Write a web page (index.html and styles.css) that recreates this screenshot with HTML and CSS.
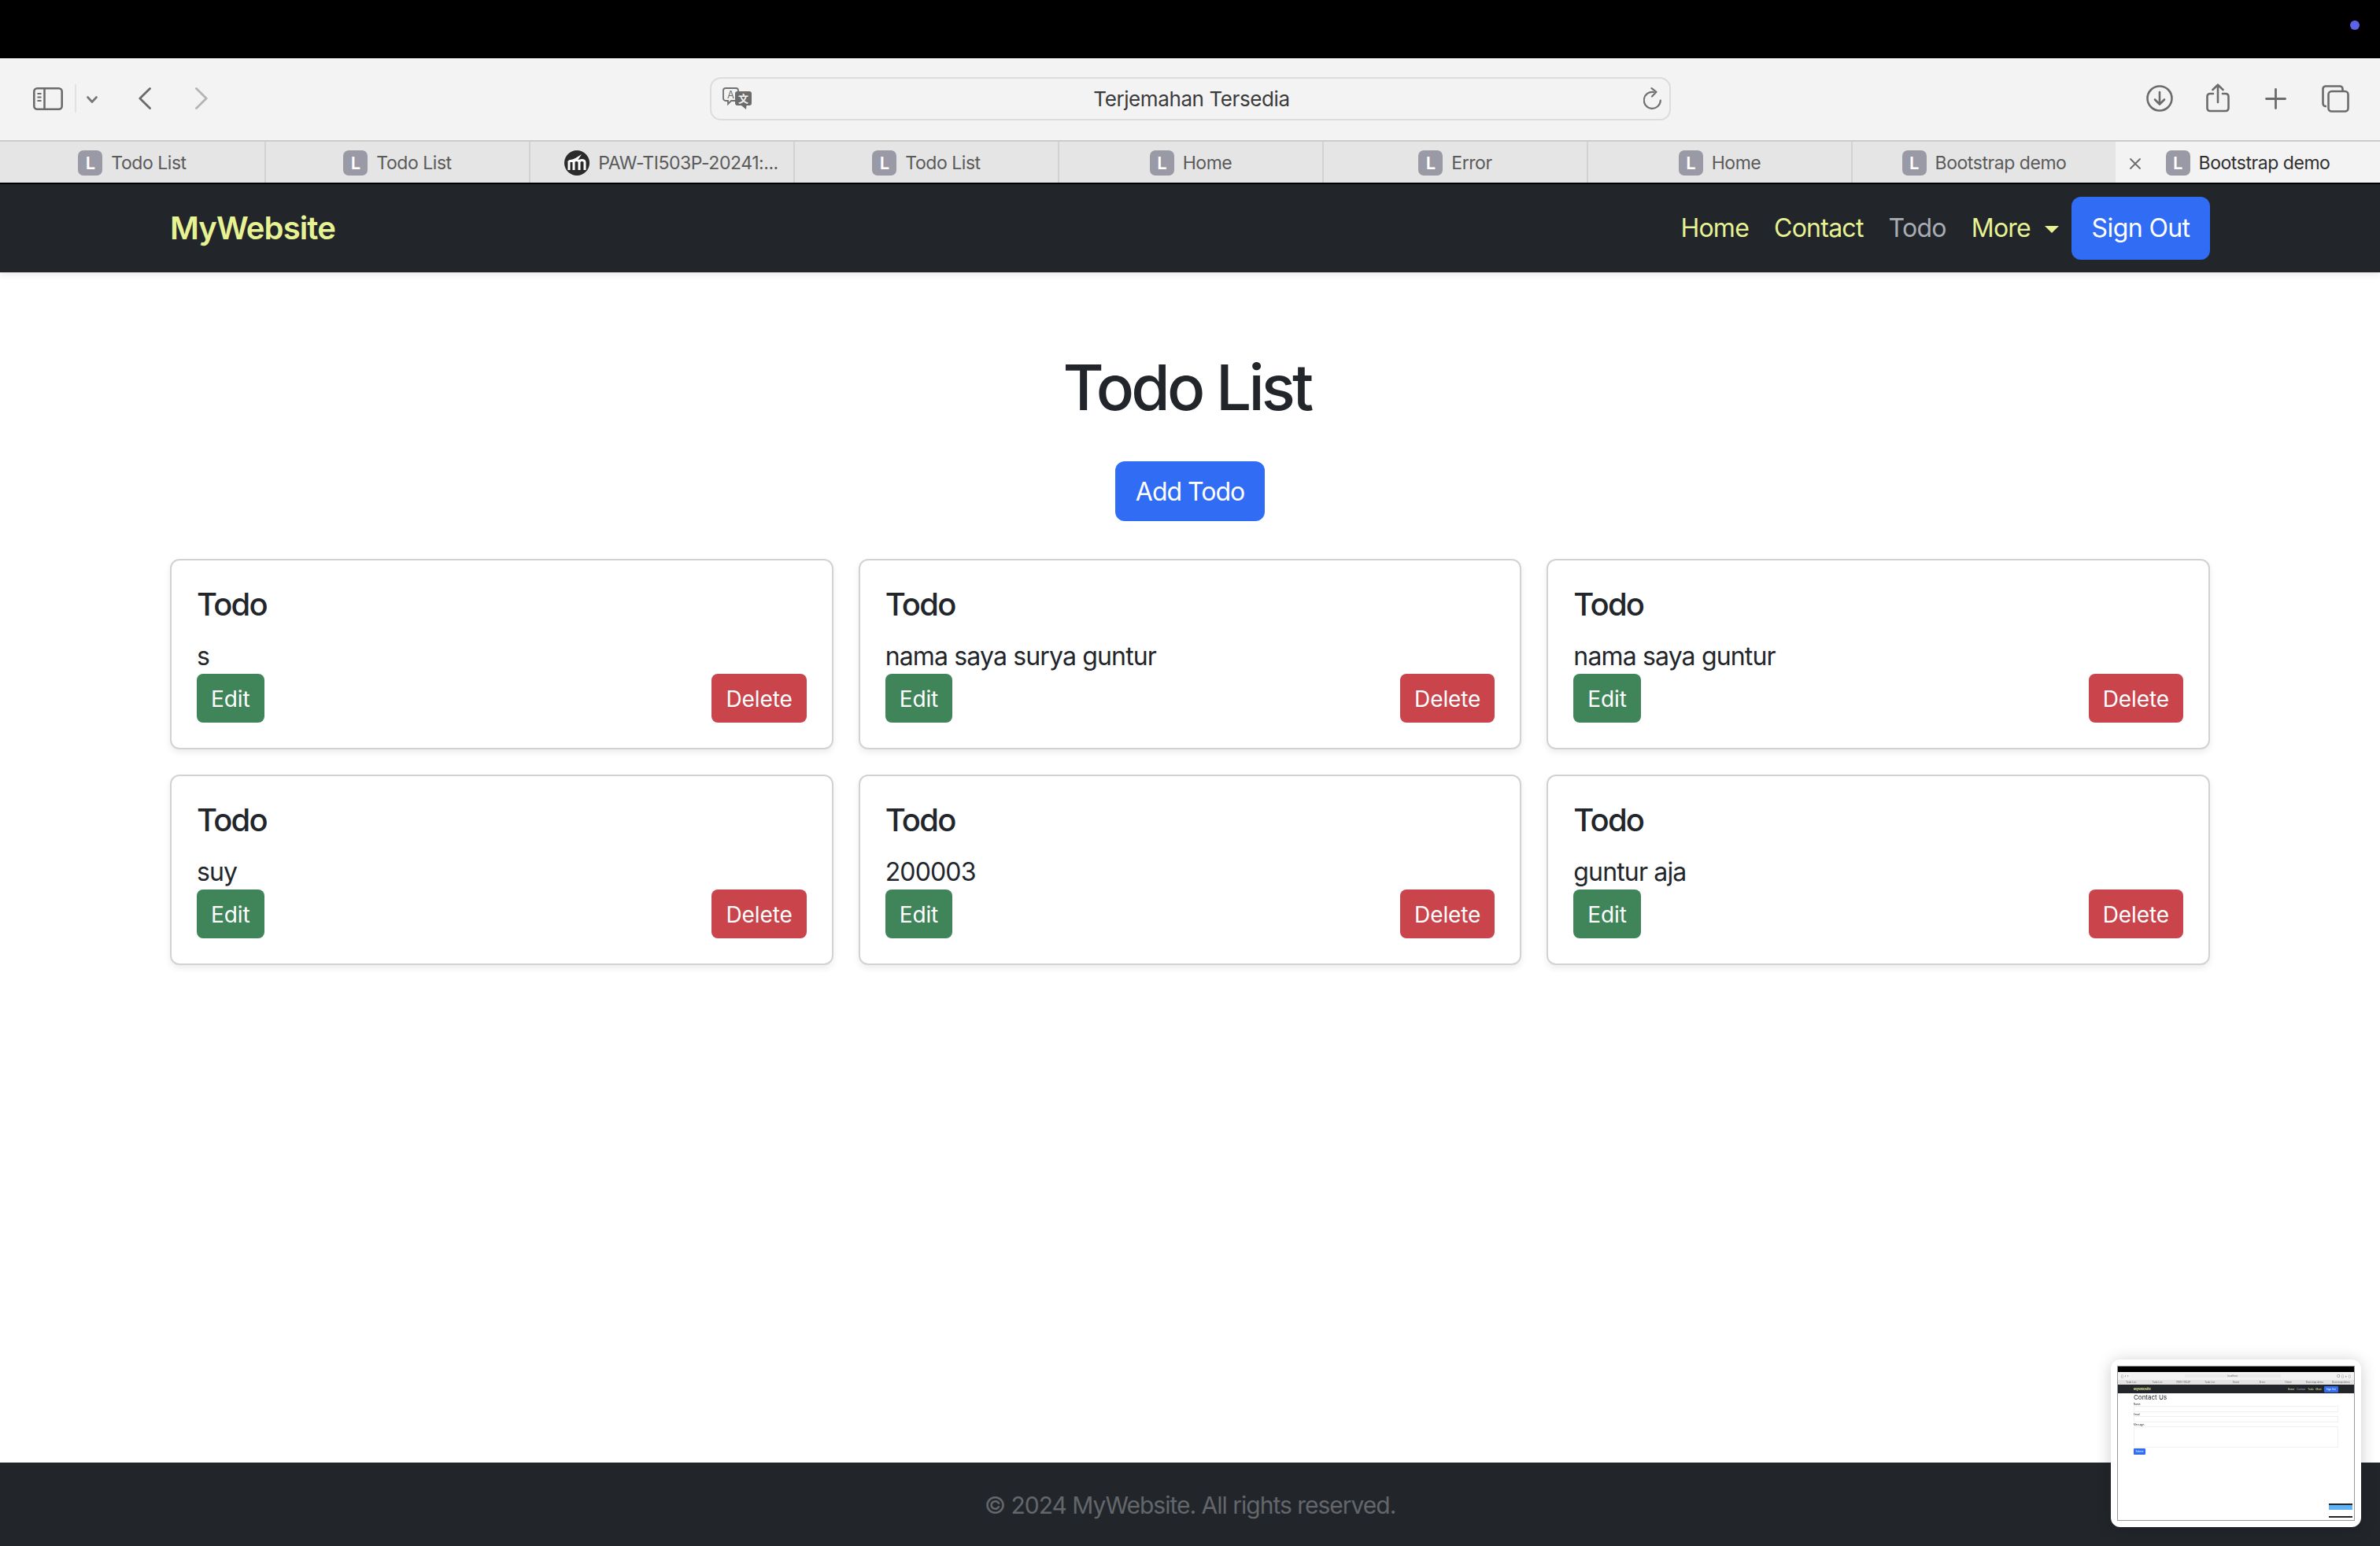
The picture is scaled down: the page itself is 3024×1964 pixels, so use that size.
FILE: index.html
```html
<!DOCTYPE html>
<html>
<head>
  <title>Todo List</title>
  <meta charset="utf-8" />
  <link rel="stylesheet" href="styles.css">
</head>
<body>
  <div class="menu-strip"><span class="record-dot"></span></div>

  <div class="toolbar">
    <div class="toolbar-left">
      <svg class="icon-sidebar" viewBox="0 0 38 29" fill="none" stroke="#6b6b6b" stroke-width="2.6">
        <rect x="1.3" y="1.3" width="35.4" height="26.4" rx="4" />
        <path d="M14.5 1.3v26.4" />
        <path d="M5.5 8h5M5.5 12.5h5M5.5 17h5" stroke-width="2" />
      </svg>
      <span class="toolbar-sep"></span>
      <svg class="icon-chevron" viewBox="0 0 14 9" fill="none" stroke="#767676" stroke-width="2.6" stroke-linecap="round" stroke-linejoin="round">
        <path d="M1.5 1.5 7 7.5l5.5-6" />
      </svg>
      <svg class="icon-back" viewBox="0 0 16 28" fill="none" stroke="#6b6b6b" stroke-width="2.8" stroke-linecap="round" stroke-linejoin="round">
        <path d="M14.5 1.5 1.8 14l12.7 12.5" />
      </svg>
      <svg class="icon-forward" viewBox="0 0 16 28" fill="none" stroke="#b4b4b4" stroke-width="2.8" stroke-linecap="round" stroke-linejoin="round">
        <path d="M1.5 1.5 14.2 14 1.5 26.5" />
      </svg>
    </div>

    <div class="url-bar">
      <svg class="icon-translate" viewBox="0 0 37 28">
        <path d="M4 1h13a3 3 0 0 1 3 3v10a3 3 0 0 1-3 3h-6l-4 4v-4H4a3 3 0 0 1-3-3V4a3 3 0 0 1 3-3z" fill="#f3f3f3" stroke="#707070" stroke-width="1.8" />
        <text class="translate-a" x="10.5" y="13.500" text-anchor="middle">A</text>
        <path d="M19 5h15a3 3 0 0 1 3 3v12a3 3 0 0 1-3 3h-3.500L30 28l-6-5h-5a3 3 0 0 1-3-3V8a3 3 0 0 1 3-3z" fill="#6b6b6b" />
        <text class="translate-zh" x="26.500" y="19" text-anchor="middle">文</text>
      </svg>
      <span class="url-text">Terjemahan Tersedia</span>
      <svg class="icon-reload" viewBox="0 0 23 28" fill="none" stroke="#707070" stroke-width="2.200" stroke-linecap="round" stroke-linejoin="round">
        <path d="M21.800 16.500A10.500 10.500 0 1 1 13 6" />
        <path d="M10.500 1.200 16.500 5.800 11 11.500" />
      </svg>
    </div>

    <div class="toolbar-right">
      <svg class="icon-download" viewBox="0 0 34 34" fill="none" stroke="#6b6b6b" stroke-width="2.600" stroke-linecap="round" stroke-linejoin="round">
        <circle cx="17" cy="17" r="15.500" />
        <path d="M17 9v15M11 18.500l6 6 6-6" />
      </svg>
      <svg class="icon-share" viewBox="0 0 30 37" fill="none" stroke="#6b6b6b" stroke-width="2.600" stroke-linecap="round" stroke-linejoin="round">
        <path d="M9 13H5a3.500 3.500 0 0 0-3.500 3.500v15A3.500 3.500 0 0 0 5 35h20a3.500 3.500 0 0 0 3.500-3.500v-15A3.500 3.500 0 0 0 25 13h-4" />
        <path d="M15 24V2M8.500 8 15 1.700 21.500 8" />
      </svg>
      <svg class="icon-plus" viewBox="0 0 27 27" fill="none" stroke="#6b6b6b" stroke-width="2.800" stroke-linecap="round">
        <path d="M13.500 1.500v24M1.500 13.500h24" />
      </svg>
      <svg class="icon-tabs" viewBox="0 0 35 35" fill="none" stroke="#6b6b6b" stroke-width="2.600" stroke-linejoin="round">
        <path d="M6 27H5a3.500 3.500 0 0 1-3.500-3.500V5A3.500 3.500 0 0 1 5 1.500h18A3.500 3.500 0 0 1 26.500 5v2" />
        <rect x="8.500" y="8" width="25" height="25.500" rx="4" />
      </svg>
    </div>
  </div>

  <div class="tab-strip">
    <div class="tab"><span class="favicon">L</span><span>Todo List</span></div>
    <div class="tab"><span class="favicon">L</span><span>Todo List</span></div>
    <div class="tab tab-long">
      <svg class="favicon-moodle" viewBox="0 0 32 32">
        <circle cx="16" cy="16" r="16" fill="#2b2b2b" />
        <path d="M3 14.500 14 10l8-5-4 6z" fill="#fff" />
        <path d="M6 25V15c0-2 6-2.500 6 0v10M12 25V15c0-3 7-3.500 7 0v10M19 15c0-3 7-3.500 7 0v10" fill="none" stroke="#fff" stroke-width="3" />
      </svg>
      <span>PAW-TI503P-20241:...</span>
    </div>
    <div class="tab"><span class="favicon">L</span><span>Todo List</span></div>
    <div class="tab"><span class="favicon">L</span><span>Home</span></div>
    <div class="tab"><span class="favicon">L</span><span>Error</span></div>
    <div class="tab"><span class="favicon">L</span><span>Home</span></div>
    <div class="tab"><span class="favicon">L</span><span>Bootstrap demo</span></div>
    <div class="tab tab-active">
      <svg class="tab-close" viewBox="0 0 16 16" fill="none" stroke="#6b6b6b" stroke-width="1.800" stroke-linecap="round">
        <path d="M2 2l12 12M14 2 2 14" />
      </svg>
      <span class="favicon">L</span><span>Bootstrap demo</span>
    </div>
  </div>

  <nav class="navbar">
    <a class="brand">MyWebsite</a>
    <div class="nav-links">
      <a class="nav-link">Home</a>
      <a class="nav-link">Contact</a>
      <a class="nav-link nav-link-current">Todo</a>
      <a class="nav-link">More<span class="caret"></span></a>
      <a class="btn btn-primary btn-signout">Sign Out</a>
    </div>
  </nav>

  <main class="content">
    <h1>Todo List</h1>
    <div class="add-row"><a class="btn btn-primary">Add Todo</a></div>

    <div class="todo-grid">
      <div class="card">
        <h5>Todo</h5>
        <p>s</p>
        <div class="card-actions"><a class="btn btn-sm btn-success">Edit</a><a class="btn btn-sm btn-danger">Delete</a></div>
      </div>
      <div class="card">
        <h5>Todo</h5>
        <p>nama saya surya guntur</p>
        <div class="card-actions"><a class="btn btn-sm btn-success">Edit</a><a class="btn btn-sm btn-danger">Delete</a></div>
      </div>
      <div class="card">
        <h5>Todo</h5>
        <p>nama saya guntur</p>
        <div class="card-actions"><a class="btn btn-sm btn-success">Edit</a><a class="btn btn-sm btn-danger">Delete</a></div>
      </div>
      <div class="card">
        <h5>Todo</h5>
        <p>suy</p>
        <div class="card-actions"><a class="btn btn-sm btn-success">Edit</a><a class="btn btn-sm btn-danger">Delete</a></div>
      </div>
      <div class="card">
        <h5>Todo</h5>
        <p>200003</p>
        <div class="card-actions"><a class="btn btn-sm btn-success">Edit</a><a class="btn btn-sm btn-danger">Delete</a></div>
      </div>
      <div class="card">
        <h5>Todo</h5>
        <p>guntur aja</p>
        <div class="card-actions"><a class="btn btn-sm btn-success">Edit</a><a class="btn btn-sm btn-danger">Delete</a></div>
      </div>
    </div>
  </main>

  <footer class="footer">© 2024 MyWebsite. All rights reserved.</footer>

  <!-- floating screenshot preview -->
  <div class="preview">
    <div class="preview-shot">
      <div class="mini-black"></div>
      <div class="mini-toolbar">
        <span class="mini-icons">▯ ‹ ›</span>
        <span class="mini-url">localhost</span>
        <span class="mini-icons">○ ▯ + ▯</span>
      </div>
      <div class="mini-tabs">
        <span>Todo List</span><span>Todo List</span><span>PAW-TI503P</span><span>Todo List</span><span>Home</span><span>Error</span><span>Home</span><span>Bootstrap demo</span><span>Bootstrap demo</span>
      </div>
      <div class="mini-nav">
        <span class="mini-brand">MyWebsite</span>
        <span class="mini-links">Home</span>
        <span class="mini-link-dim">Contact</span>
        <span>Todo</span>
        <span>More</span>
        <span class="mini-signout">Sign Out</span>
      </div>
      <div class="mini-body">
        <div class="mini-title">Contact Us</div>
        <div class="mini-label">Name:</div>
        <div class="mini-input"></div>
        <div class="mini-label">Email:</div>
        <div class="mini-input"></div>
        <div class="mini-label">Message:</div>
        <div class="mini-input mini-textarea"></div>
        <div class="mini-submit">Submit</div>
      </div>
      <div class="mini-thumb"><div class="mini-thumb-nav"></div><div class="mini-thumb-hero"></div><div class="mini-thumb-foot"></div></div>
    </div>
  </div>
</body>
</html>
```

FILE: styles.css
```css
html, body {
  height: 100%;
}

body {
  display: flex;
  flex-direction: column;
  width: 3024px;
  height: 1964px;
  margin: 0;
  overflow: hidden;
  position: relative;
  background: #fff;
  color: #22262b;
  font-family: Inter, "Liberation Sans", "Noto Sans CJK SC", sans-serif;
  font-size: 32px;
  line-height: 48px;
  letter-spacing: -0.85px;
}

/* browser chrome */
.menu-strip {
  display: flex;
  justify-content: flex-end;
  align-items: flex-start;
  height: 74px;
  padding: 26px 26px 0 0;
  box-sizing: border-box;
  background: #000;
}

.record-dot {
  width: 12px;
  height: 12px;
  border-radius: 50%;
  background: #6060e8;
}

.toolbar {
  display: grid;
  grid-template-columns: 1fr 1221px 1fr;
  align-items: center;
  height: 104px;
  padding-bottom: 2px;
  box-sizing: border-box;
  background: #f3f3f3;
}

.toolbar-left {
  display: flex;
  align-items: center;
  padding-left: 42px;
}

.toolbar-right {
  display: flex;
  align-items: center;
  justify-content: flex-end;
  gap: 45px;
  padding-right: 39px;
}

.icon-sidebar { width: 38px; height: 29px; }
.toolbar-sep { width: 2px; height: 36px; margin: 0 13px 0 15px; background: #e2e2e2; }
.icon-chevron { width: 14px; height: 9px; margin-top: 2px; }
.icon-back { width: 16px; height: 28px; margin-left: 52px; }
.icon-forward { width: 16px; height: 28px; margin-left: 56px; }
.icon-download { width: 34px; height: 34px; }
.icon-share { width: 30px; height: 37px; margin: -2px 0 0 -3px; }
.icon-plus { width: 27px; height: 27px; }
.icon-tabs { width: 35px; height: 35px; }

.url-bar {
  display: grid;
  grid-template-columns: 37px 1fr 37px;
  align-items: center;
  height: 55px;
  padding: 0 10px 0 14px;
  box-sizing: border-box;
  border: 2px solid #dcdcdc;
  border-radius: 14px;
}

.icon-translate { width: 37px; height: 28px; }
.icon-reload { width: 23px; height: 28px; justify-self: end; }
.translate-a { font-size: 13px; fill: #707070; letter-spacing: 0; }
.translate-zh { font-size: 13px; font-weight: 700; fill: #f3f3f3; letter-spacing: 0; font-family: "Noto Sans CJK SC", sans-serif; }

.url-text {
  padding-top: 2px;
  font-size: 26px;
  color: #3a3a3a;
  letter-spacing: -0.4px;
  text-align: center;
}

.tab-strip {
  display: grid;
  grid-template-columns: repeat(9, 1fr);
  height: 56px;
  box-sizing: border-box;
  background: #e5e5e5;
  border-top: 2px solid #cbcbcb;
  border-bottom: 2px solid #000;
}

.tab {
  display: flex;
  align-items: center;
  justify-content: center;
  gap: 11px;
  min-width: 0;
  padding-top: 2px;
  border-left: 2px solid #d2d2d2;
  color: #5a5a5a;
  font-size: 23px;
  letter-spacing: -0.45px;
  white-space: nowrap;
}

.tab:first-child {
  border-left: 0;
}

/* long title sits off centre in the reference */
.tab-long {
  padding-left: 24px;
}

.tab-active {
  position: relative;
  border-left: 0;
  background: #f3f3f3;
  color: #2f2f2f;
}

.favicon {
  display: flex;
  align-items: center;
  justify-content: center;
  flex: none;
  width: 31px;
  height: 32px;
  border-radius: 7px;
  background: #9a9aa6;
  color: #fff;
  font-size: 22px;
  font-weight: 600;
}

.favicon-moodle { width: 32px; height: 32px; flex: none; }

.tab-close {
  position: absolute;
  left: 17px;
  top: 20px;
  width: 16px;
  height: 16px;
}

/* site */
.navbar {
  display: flex;
  align-items: center;
  justify-content: space-between;
  height: 112px;
  padding: 0 216px;
  box-sizing: border-box;
  background: #22262b;
  box-shadow: 0 4px 8px rgba(0, 0, 0, 0.075);
}

.brand {
  color: #e7f293;
  font-size: 40px;
  font-weight: 600;
  letter-spacing: -0.9px;
}

.nav-links {
  display: flex;
  align-items: stretch;
}

.nav-link {
  padding: 16px;
  color: #e7f293;
  letter-spacing: -0.75px;
}

.nav-link-current {
  color: #a8adb3;
}

.caret {
  display: inline-block;
  margin-left: 18px;
  vertical-align: 5px;
  border-top: 9px solid #e7f293;
  border-left: 9px solid transparent;
  border-right: 9px solid transparent;
}

.btn {
  display: inline-block;
  padding: 13px 24px 11px;
  border: 2px solid transparent;
  border-radius: 12px;
  color: #fff;
  letter-spacing: -1px;
  text-align: center;
}

.btn-primary { background: #316cf5; }
.btn-success { background: #40855a; }
.btn-danger { background: #ca444c; }

.btn-sm {
  padding: 9px 16px 7px;
  border-radius: 8px;
  font-size: 28px;
  line-height: 42px;
  letter-spacing: -0.1px;
}

.btn-signout {
  width: 176px;
  padding: 14px 0;
  box-sizing: border-box;
  letter-spacing: -0.6px;
}

.content {
  flex: 1;
  width: 2592px;
  margin: 0 auto;
}

h1 {
  margin: 98px 0 46px;
  padding-right: 8px;
  font-size: 80px;
  font-weight: 500;
  line-height: 96px;
  letter-spacing: -3.8px;
  text-align: center;
}

.add-row {
  display: flex;
  justify-content: center;
  margin-bottom: 48px;
}

.todo-grid {
  display: grid;
  grid-template-columns: repeat(3, 1fr);
  gap: 32px;
}

.card {
  padding: 32px;
  border: 2px solid rgba(0, 0, 0, 0.175);
  border-radius: 12px;
  box-shadow: 0 4px 8px rgba(0, 0, 0, 0.075);
}

h5 {
  margin: 0 0 16px;
  font-size: 40px;
  font-weight: 500;
  line-height: 48px;
  letter-spacing: -1.8px;
}

.card p {
  margin: 0 0 -2px;
  padding-top: 2px;
}

.card-actions {
  display: flex;
  justify-content: space-between;
}

.footer {
  height: 106px;
  background: #22262b;
  color: #63676c;
  font-size: 30px;
  letter-spacing: -1px;
  line-height: 108px;
  text-align: center;
}

/* screenshot preview, floats over the page */
.preview {
  position: absolute;
  left: 2682px;
  top: 1727px;
  width: 318px;
  height: 213px;
  padding: 8px;
  box-sizing: border-box;
  background: #fff;
  border-radius: 12px;
  box-shadow: 0 2px 20px rgba(0, 0, 0, 0.2);
}

.preview-shot {
  position: relative;
  height: 100%;
  box-sizing: border-box;
  border: 1px solid #999;
  overflow: hidden;
  filter: blur(0.3px);
  font-size: 3px;
  line-height: 4px;
  letter-spacing: 0;
}

.mini-black { height: 7px; background: #000; }

.mini-toolbar {
  display: flex;
  justify-content: space-between;
  align-items: center;
  height: 10px;
  padding: 0 4px;
  background: #f3f3f3;
  color: #666;
}

.mini-icons { font-size: 5px; }

.mini-url {
  width: 122px;
  background: #ebebeb;
  text-align: center;
}

.mini-tabs {
  display: grid;
  grid-template-columns: repeat(9, 1fr);
  height: 6px;
  background: #e3e3e3;
  color: #666;
  line-height: 6px;
  text-align: center;
  white-space: nowrap;
}

.mini-nav {
  display: flex;
  align-items: center;
  gap: 3px;
  height: 11px;
  padding: 0 20px;
  background: #22262b;
  color: #e7f293;
}

.mini-brand { font-size: 4px; font-weight: 600; }
.mini-links { margin-left: auto; }
.mini-link-dim { color: #a8adb3; }

.mini-signout {
  padding: 2px 3px;
  border-radius: 1px;
  background: #316cf5;
  color: #fff;
}

.mini-body {
  padding: 0 20px;
}

.mini-title {
  margin-bottom: 2px;
  font-size: 8px;
  line-height: 10px;
}

.mini-input {
  height: 8px;
  margin-bottom: 1px;
  box-sizing: border-box;
  border: 1px solid #f0f0f0;
}

.mini-textarea { height: 27px; }

.mini-submit {
  width: 15px;
  padding: 2px 0;
  border-radius: 1px;
  background: #316cf5;
  color: #fff;
  text-align: center;
}

.mini-thumb {
  position: absolute;
  right: 1px;
  bottom: 1px;
  width: 32px;
  height: 21px;
  box-sizing: border-box;
  padding: 1px;
  background: #fff;
}

.mini-thumb-nav { height: 2px; background: #22262b; }
.mini-thumb-hero { height: 6px; background: #5fb4f5; }
.mini-thumb-foot { height: 2px; margin-top: 8px; background: #22262b; }
```
